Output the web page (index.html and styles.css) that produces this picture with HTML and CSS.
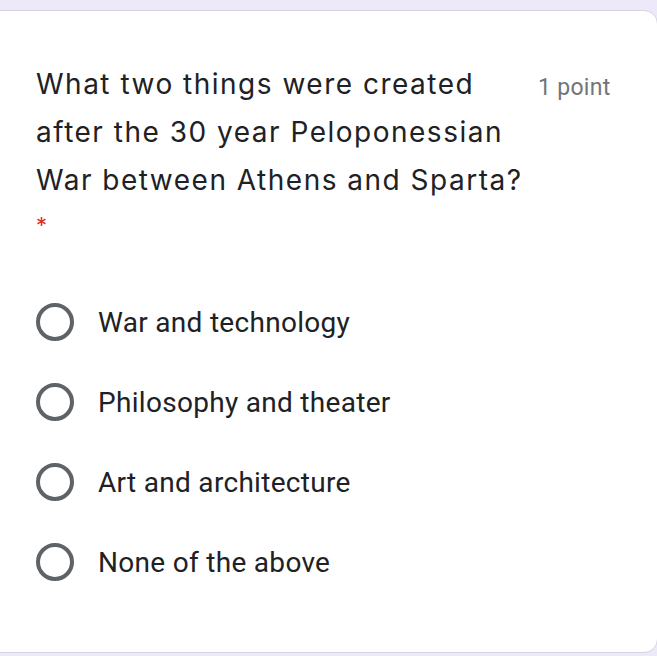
FILE: index.html
```html
<!DOCTYPE html>
<html>
<head>
<meta charset="utf-8">
<link rel="stylesheet" href="styles.css">
</head>
<body>
<div class="card">
  <div class="header">
    <div class="title">What two things were created after the 30 year Peloponessian War between Athens and Sparta? <span class="req">*</span></div>
    <div class="points">1 point</div>
  </div>
  <div class="options">
    <label class="option"><span class="radio"></span><span class="label">War and technology</span></label>
    <label class="option"><span class="radio"></span><span class="label">Philosophy and theater</span></label>
    <label class="option"><span class="radio"></span><span class="label">Art and architecture</span></label>
    <label class="option"><span class="radio"></span><span class="label">None of the above</span></label>
  </div>
</div>
</body>
</html>
```
FILE: styles.css
```css
html, body {
  margin: 0;
  padding: 0;
  background: #ede9f8;
  height: 656px;
  overflow: hidden;
}
.card {
  box-sizing: border-box;
  margin: 10px 0 0 -20px;
  width: 678px;
  height: 643px;
  background: #ffffff;
  border: 1px solid #d6d3e0;
  border-radius: 14px;
  padding: 49px 0 0 55px;
}
.header {
  display: flex;
  align-items: flex-start;
}
.title {
  width: 490px;
  font-family: Inter, sans-serif;
  font-size: 28px;
  letter-spacing: 1.5px;
  line-height: 48px;
  color: #202124;
}
.req {
  display: block;
  padding-top: 9px;
  color: #d93025;
  font-size: 22px;
  letter-spacing: 0;
  line-height: 24px;
}
.points {
  margin-left: 12px;
  font-family: Roboto, sans-serif;
  font-size: 23px;
  letter-spacing: 0.3px;
  line-height: 56px;
  color: #70757a;
}
.options {
  display: flex;
  flex-direction: column;
  margin-top: 45px;
}
.option {
  display: flex;
  align-items: center;
  height: 80px;
}
.radio {
  box-sizing: border-box;
  width: 38px;
  height: 38px;
  border: 4px solid #5f6368;
  border-radius: 50%;
}
.label {
  margin-left: 24px;
  font-family: Roboto, sans-serif;
  font-size: 28px;
  letter-spacing: 0.3px;
  color: #202124;
}
```
